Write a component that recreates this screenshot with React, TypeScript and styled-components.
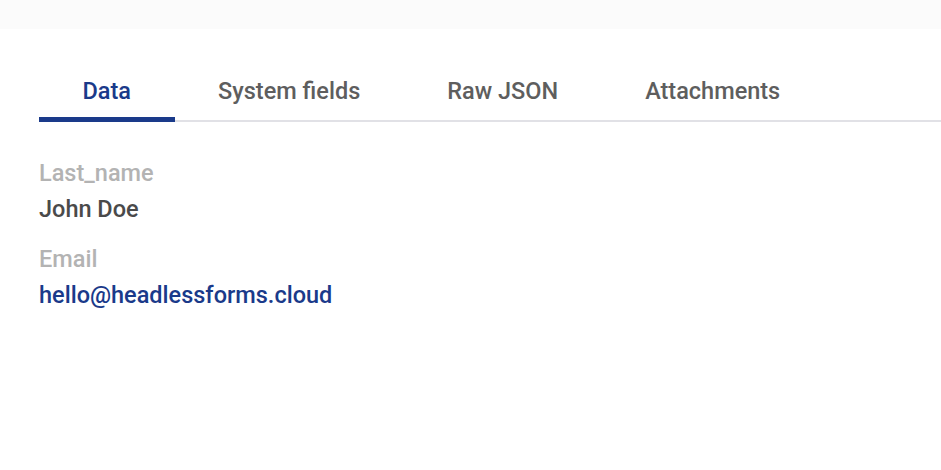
import styled, { createGlobalStyle } from "styled-components";

const GlobalStyle = createGlobalStyle`
  html, body {
    margin: 0;
    padding: 0;
    background: #ffffff;
    font-family: Roboto, "Liberation Sans", Arial, sans-serif;
  }
`;

const tabs = ["Data", "System fields", "Raw JSON", "Attachments"];

const fields = [
  { label: "Last_name", value: "John Doe" },
  { label: "Email", value: "hello@headlessforms.cloud", link: true },
];

function App() {
  return (
    <>
      <GlobalStyle />
      <TopBar />
      <Panel>
        <TabBar>
          {tabs.map((tab, i) => (
            <Tab key={tab} $active={i === 0}>
              {tab}
            </Tab>
          ))}
        </TabBar>
        <Fields>
          {fields.map((f) => (
            <Field key={f.label}>
              <Label>{f.label}</Label>
              <Value $link={f.link}>{f.value}</Value>
            </Field>
          ))}
        </Fields>
      </Panel>
    </>
  );
}

export default App;

const TopBar = styled.div`
  height: 29px;
  background: #fbfbfb;
`;

const Panel = styled.main`
  padding: 47px 0 0 39px;
`;

const TabBar = styled.div`
  display: flex;
  border-bottom: 2px solid #e1e1e6;
`;

const Tab = styled.div<{ $active?: boolean }>`
  position: relative;
  padding: 0 43.5px;
  height: 44px;
  line-height: 30px;
  font-size: 23.5px;
  font-weight: 500;
  color: ${(p) => (p.$active ? "#1a3a8a" : "#5e5e5e")};

  &::after {
    content: "";
    display: ${(p) => (p.$active ? "block" : "none")};
    position: absolute;
    left: 0;
    right: 0;
    bottom: -2px;
    height: 5px;
    background: #1a3a8a;
  }
`;

const Fields = styled.div`
  display: flex;
  flex-direction: column;
  gap: 22px;
  padding-top: 37px;
`;

const Field = styled.div`
  display: flex;
  flex-direction: column;
  gap: 8px;
`;

const Label = styled.div`
  font-size: 23.5px;
  font-weight: 500;
  line-height: 28px;
  color: #b3b3b3;
`;

const Value = styled.div<{ $link?: boolean }>`
  font-size: 23.5px;
  font-weight: 500;
  line-height: 28px;
  color: ${(p) => (p.$link ? "#1a3a8a" : "#4a4a4a")};
`;
